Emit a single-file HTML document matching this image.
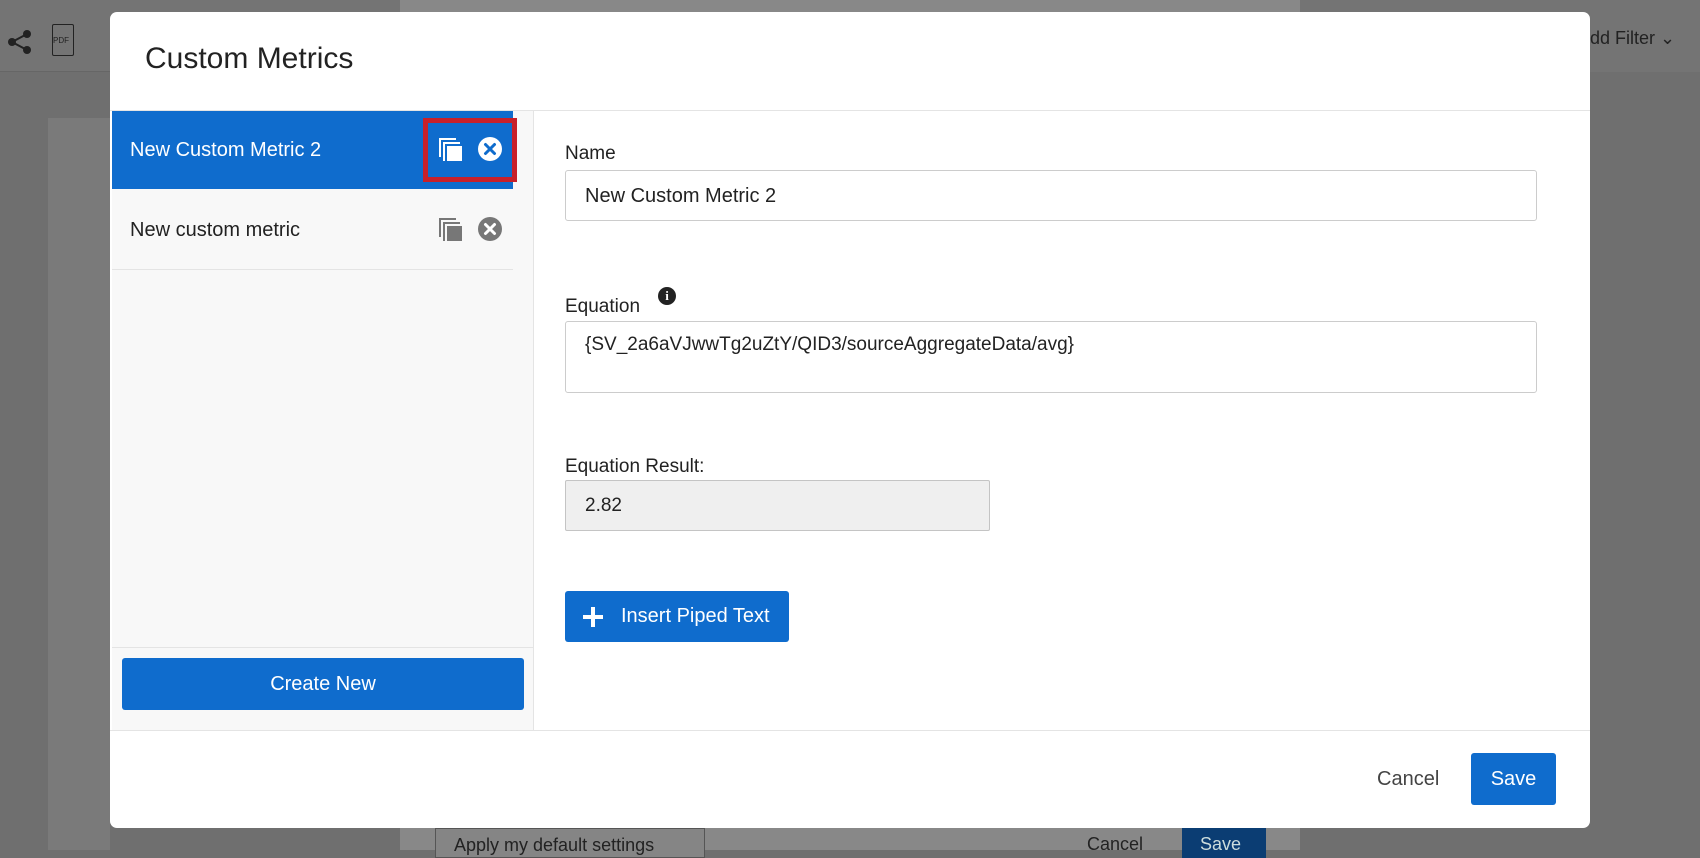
<!DOCTYPE html>
<html><head><meta charset="utf-8"><style>
*{box-sizing:border-box;margin:0;padding:0}
body{width:1700px;height:850px;overflow:hidden;background:#6f6f6f;font-family:"Liberation Sans",sans-serif;position:relative}
.abs{position:absolute}
</style></head><body>
<!-- background -->
<div class="abs" style="left:0;top:0;width:1700px;height:72px;background:#747474;border-bottom:1px solid #666"></div>
<div class="abs" style="left:48px;top:118px;width:62px;height:732px;background:#7a7a7a"></div>
<div class="abs" style="left:400px;top:0;width:900px;height:850px;background:#888"></div>
<div class="abs" style="left:1300px;top:0;width:400px;height:72px;background:#747474"></div>
<div class="abs" style="left:1590px;top:28px;font-size:18px;color:#222">dd Filter &#8964;</div>
<div class="abs" style="left:435px;top:828px;width:270px;height:30px;border:1px solid #555;background:#858585;font-size:18px;color:#222;padding:6px 18px">Apply my default settings</div>
<div class="abs" style="left:1087px;top:834px;font-size:18px;color:#222">Cancel</div>
<div class="abs" style="left:1182px;top:828px;width:84px;height:30px;background:#0b3d73;color:#cdd;font-size:18px;padding:6px 18px">Save</div>
<svg class="abs" style="left:6px;top:28px" width="30" height="30" viewBox="0 0 30 30"><g fill="#222"><circle cx="21" cy="6" r="4"/><circle cx="6" cy="14" r="4"/><circle cx="21" cy="22" r="4"/></g><path d="M21 6 6 14 21 22" stroke="#222" stroke-width="2" fill="none"/></svg>
<div class="abs" style="left:52px;top:24px;width:22px;height:32px;border:1.5px solid #222;border-radius:2px;font-size:8px;padding-top:11px;color:#222">PDF</div>

<!-- modal -->
<div class="abs" style="left:110px;top:12px;width:1480px;height:816px;background:#fff;border-radius:7px;overflow:hidden">
  <div class="abs" style="left:35px;top:30px;font-size:30px;color:#222">Custom Metrics</div>
  <div class="abs" style="left:0;top:98px;width:1480px;height:1px;background:#e4e4e4"></div>
  <!-- left col -->
  <div class="abs" style="left:2px;top:99px;width:422px;height:619px;background:#f8f8f8;border-right:1px solid #e4e4e4"></div>
  <div class="abs" style="left:2px;top:99px;width:401px;height:78px;background:#0f6ccd"></div>
  <div class="abs" style="left:20px;top:127px;font-size:20px;color:#fff">New Custom Metric 2</div>
  <div class="abs" style="left:313px;top:106px;width:94px;height:64px;border:5px solid #c8202a"></div>
  <svg class="abs" style="left:328px;top:125px" width="26" height="26" viewBox="0 0 26 26"><path d="M1 1h17v2H3v17H1z M5 5h17v2H7v17H5z" fill="#fff"/><rect x="9" y="9" width="15" height="15" fill="#fff"/></svg>
  <svg class="abs" style="left:367px;top:124px" width="26" height="26" viewBox="0 0 26 26"><circle cx="13" cy="13" r="12" fill="#fff"/><path d="M8.5 8.5l9 9M17.5 8.5l-9 9" stroke="#0f6ccd" stroke-width="3" stroke-linecap="round"/></svg>
  <div class="abs" style="left:2px;top:177px;width:401px;height:81px;background:#f8f8f8;border-bottom:1px solid #e4e4e4"></div>
  <div class="abs" style="left:20px;top:207px;font-size:20px;color:#222">New custom metric</div>
  <svg class="abs" style="left:328px;top:205px" width="26" height="26" viewBox="0 0 26 26"><path d="M1 1h17v2H3v17H1z M5 5h17v2H7v17H5z" fill="#777"/><rect x="9" y="9" width="15" height="15" fill="#777"/></svg>
  <svg class="abs" style="left:367px;top:204px" width="26" height="26" viewBox="0 0 26 26"><circle cx="13" cy="13" r="12" fill="#777"/><path d="M8.5 8.5l9 9M17.5 8.5l-9 9" stroke="#fff" stroke-width="3" stroke-linecap="round"/></svg>
  <div class="abs" style="left:2px;top:635px;width:422px;height:1px;background:#e4e4e4"></div>
  <div class="abs" style="left:12px;top:646px;width:402px;height:52px;background:#0f6ccd;border-radius:3px;color:#fff;font-size:20px;text-align:center;line-height:52px">Create New</div>
  <div class="abs" style="left:0;top:718px;width:1480px;height:1px;background:#e4e4e4"></div>
  <!-- right -->
  <div class="abs" style="left:455px;top:131px;font-size:19px;color:#222">Name</div>
  <div class="abs" style="left:455px;top:158px;width:972px;height:51px;border:1px solid #ccc;border-radius:3px;font-size:20px;color:#222;padding:14px 19px">New Custom Metric 2</div>
  <div class="abs" style="left:455px;top:284px;font-size:19px;color:#222">Equation</div>
  <div class="abs" style="left:548px;top:275px;width:18px;height:18px;border-radius:50%;background:#222;color:#fff;font-size:13px;font-weight:bold;text-align:center;line-height:18px;font-family:'Liberation Serif',serif">i</div>
  <div class="abs" style="left:455px;top:309px;width:972px;height:72px;border:1px solid #ccc;border-radius:3px;font-size:19px;color:#222;padding:12px 19px">{SV_2a6aVJwwTg2uZtY/QID3/sourceAggregateData/avg}</div>
  <div class="abs" style="left:455px;top:444px;font-size:19px;color:#222">Equation Result:</div>
  <div class="abs" style="left:455px;top:468px;width:425px;height:51px;border:1px solid #c4c4c4;border-radius:2px;background:#efefef;font-size:19px;color:#222;padding:14px 19px">2.82</div>
  <div class="abs" style="left:455px;top:579px;width:224px;height:51px;background:#0f6ccd;border-radius:3px;color:#fff;font-size:20px;line-height:51px;padding-left:56px">Insert Piped Text</div>
  <svg class="abs" style="left:472px;top:594px" width="22" height="22" viewBox="0 0 22 22"><path d="M11 1v20M1 11h20" stroke="#fff" stroke-width="4"/></svg>
  <div class="abs" style="left:1267px;top:756px;font-size:20px;color:#444">Cancel</div>
  <div class="abs" style="left:1361px;top:741px;width:85px;height:52px;background:#0f6ccd;border-radius:3px;color:#fff;font-size:20px;text-align:center;line-height:52px">Save</div>
</div>
</body></html>
